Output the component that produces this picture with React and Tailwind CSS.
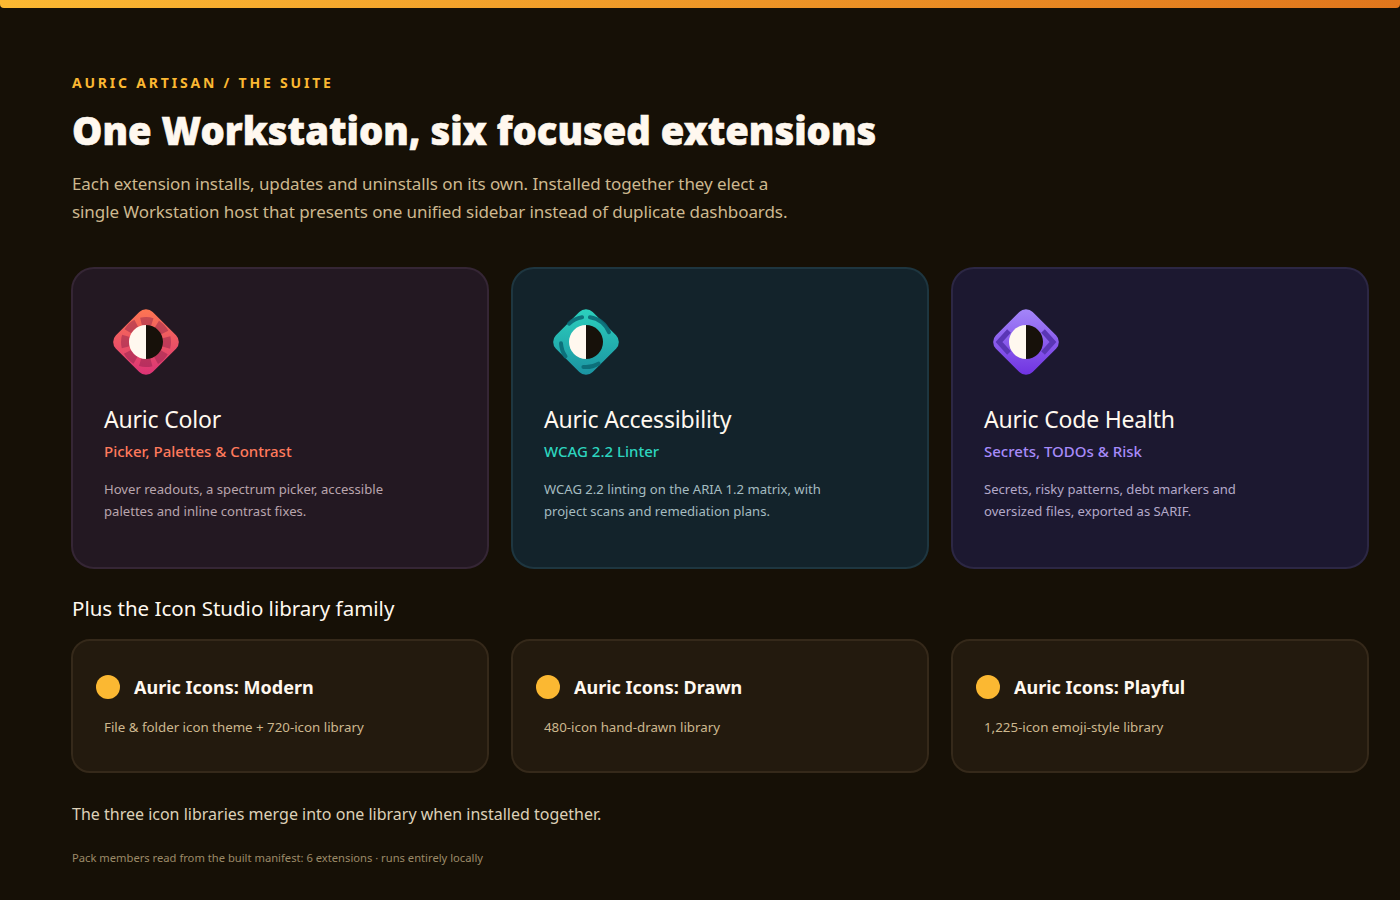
const FONT = "font-['Noto_Sans','Open_Sans',sans-serif]";

const MainIcon = ({ id, from, to, kind }) => (
  <svg viewBox="0 0 72 72" className="w-[72px] h-[72px]">
    <defs>
      {/* corner to corner, the rect is turned 45deg so this runs top to bottom on screen */}
      <linearGradient id={id} x1="0" y1="0" x2="1" y2="1">
        <stop offset="0" stopColor={from} />
        <stop offset="1" stopColor={to} />
      </linearGradient>
    </defs>
    <rect x="10" y="10" width="52" height="52" rx="9.5" transform="rotate(45 36 36)" fill={`url(#${id})`} />
    {kind === "color" && (
      <circle cx="36" cy="36" r="21" fill="none" stroke="#8a1f4a" strokeOpacity="0.45" strokeWidth="8" strokeDasharray="11.5 5" strokeDashoffset="5.75" />
    )}
    {kind === "a11y" && (
      <path
        d="M39.9 11.3 A25 25 0 0 1 59 26.2 M15.5 50.3 A25 25 0 0 1 11 37.3 M48.5 57.7 A25 25 0 0 1 33.4 60.9 M19 17.7 A25 25 0 0 1 32.1 11.3"
        fill="none"
        stroke="#0b6a76"
        strokeOpacity="0.9"
        strokeWidth="4"
        strokeLinecap="round"
      />
    )}
    {kind === "code" && (
      <path d="M19 25 L9 36 L19 47 M53 25 L63 36 L53 47" fill="none" stroke="#5a36b5" strokeWidth="5" />
    )}
    <path d="M36 19 A17 17 0 0 0 36 53 Z" fill="#fff8ef" />
    <path d="M36 19 A17 17 0 0 1 36 53 Z" fill="#17110a" />
  </svg>
);

const suites = [
  {
    name: "Auric Color",
    tag: "Picker, Palettes & Contrast",
    tagClass: "text-[#ff7a5c]",
    desc: ["Hover readouts, a spectrum picker, accessible", "palettes and inline contrast fixes."],
    card: "bg-[#231822] border-[#352635]",
    descClass: "text-[#b9a5ad]",
    icon: { id: "g-color", from: "#ff7a50", to: "#d92f78", kind: "color" },
  },
  {
    name: "Auric Accessibility",
    tag: "WCAG 2.2 Linter",
    tagClass: "text-[#2dd4bf]",
    desc: ["WCAG 2.2 linting on the ARIA 1.2 matrix, with", "project scans and remediation plans."],
    card: "bg-[#13232b] border-[#1e3640]",
    descClass: "text-[#a5bcc0]",
    icon: { id: "g-a11y", from: "#2dd4bf", to: "#1a8f9f", kind: "a11y" },
  },
  {
    name: "Auric Code Health",
    tag: "Secrets, TODOs & Risk",
    tagClass: "text-[#a78bfa]",
    desc: ["Secrets, risky patterns, debt markers and", "oversized files, exported as SARIF."],
    card: "bg-[#1c1830] border-[#2c2744]",
    descClass: "text-[#b3a8c8]",
    icon: { id: "g-code", from: "#a78bfa", to: "#6d2ee0", kind: "code" },
  },
];

const libraries = [
  { name: "Auric Icons: Modern", desc: "File & folder icon theme + 720-icon library" },
  { name: "Auric Icons: Drawn", desc: "480-icon hand-drawn library" },
  { name: "Auric Icons: Playful", desc: "1,225-icon emoji-style library" },
];

export default function App() {
  return (
    <div className={`min-h-[900px] bg-[#161006] ${FONT}`}>
      <div className="h-2 rounded-b-[4px] bg-gradient-to-r from-[#fbb832] to-[#e0761c]" />
      <div className="pl-[72px] pr-8 pt-[64px]">
        <p className="text-sm leading-[22px] font-bold tracking-[0.2em] text-[#fbb832]">AURIC ARTISAN / THE SUITE</p>
        <h1 className="mt-[10px] text-[38.2px] leading-[52px] font-black text-[#fff8ef] [-webkit-text-stroke:0.6px_#fff8ef]">One Workstation, six focused extensions</h1>
        <p className="mt-[14px] text-[17px] leading-7 tracking-[-0.08px] text-[#cdb88f]">
          Each extension installs, updates and uninstalls on its own. Installed together they elect a
          <br />
          single Workstation host that presents one unified sidebar instead of duplicate dashboards.
        </p>

        <div className="-mx-px mt-[41px] grid grid-cols-3 gap-[22px]">
          {suites.map((s) => (
            <div key={s.name} className={`h-[302px] rounded-[23px] border-2 px-[31px] pt-[37px] ${s.card}`}>
              <div className="pl-[6px]"><MainIcon {...s.icon} /></div>
              <h2 className="mt-[23px] text-[23px] leading-[36px] tracking-[-0.2px] text-[#fff8ef]">{s.name}</h2>
              <p className={`mt-[3px] text-[15px] leading-[22px] font-medium ${s.tagClass}`}>{s.tag}</p>
              <p className={`mt-[16px] text-[13.1px] leading-[22px] ${s.descClass}`}>
                {s.desc[0]}
                <br />
                {s.desc[1]}
              </p>
            </div>
          ))}
        </div>

        <h3 className="mt-[23px] text-[20.5px] leading-[32px] text-[#fff8ef]">Plus the Icon Studio library family</h3>

        <div className="-mx-px mt-[15px] grid grid-cols-3 gap-[22px]">
          {libraries.map((l) => (
            <div key={l.name} className="h-[134px] rounded-[19px] border-2 border-[#35291a] bg-[#231a0e] px-[23px] pt-[32px]">
              <div className="flex items-center gap-[14px]">
                <span className="h-6 w-6 rounded-full bg-[#fbb832]" />
                <span className="text-lg leading-7 font-bold text-[#fff8ef]">{l.name}</span>
              </div>
              <p className="mt-[15px] pl-2 text-[13.3px] leading-[22px] text-[#cdb88f]">{l.desc}</p>
            </div>
          ))}
        </div>

        <p className="mt-[29px] text-base leading-6 text-[#ddd0b8]">The three icon libraries merge into one library when installed together.</p>
        <p className="mt-[24px] text-[11.2px] leading-4 text-[#9c8a68]">Pack members read from the built manifest: 6 extensions · runs entirely locally</p>
      </div>
    </div>
  );
}
